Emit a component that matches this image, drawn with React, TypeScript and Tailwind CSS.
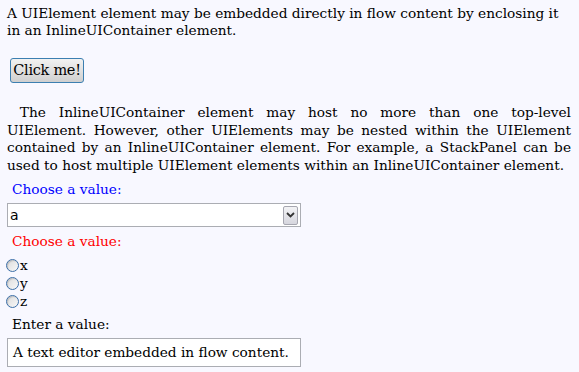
const lines = [
  "\u00a0The InlineUIContainer element may host no more than one top-level",
  "UIElement. However, other UIElements may be nested within the UIElement",
  "contained by an InlineUIContainer element. For example, a StackPanel can be",
];

export default function App() {
  return (
    <div className="w-[579px] h-[372px] bg-white overflow-hidden">
      <div
        className="h-full bg-[#f8f8ff] px-[7px] pt-[3px] text-[13.7px] leading-[17px] text-black"
        style={{ fontFamily: '"DejaVu Serif", Georgia, serif' }}
      >
        <p className="mt-[2px]">
          A UIElement element may be embedded directly in flow content by enclosing it in an InlineUIContainer element.
        </p>
        <div className="mt-[19px] pl-[3px]">
          <button className="h-[25px] w-[74px] rounded-[3px] border border-[#3c7fb1] bg-gradient-to-b from-[#f2f2f2] to-[#cfcfcf] text-[14.5px] leading-none tracking-[-0.3px]">
            Click me!
          </button>
        </div>
        <div className="mt-[21px] pr-[1px] leading-[17.5px]">
          {lines.map((l) => (
            <span key={l} className="block whitespace-nowrap text-justify [text-align-last:justify]">
              {l}
            </span>
          ))}
          <span className="block whitespace-nowrap">
            used to host multiple UIElement elements within an InlineUIContainer element.
          </span>
        </div>
        <div className="mt-[7px] pl-[5px] text-[#0000ff]">Choose a value:</div>
        <div className="mt-[5px] w-[294px] h-[24px] border border-[#abadb3] bg-white flex items-center justify-between pl-[2px] pr-[2px] text-[14px]" style={{ fontFamily: '"DejaVu Sans", sans-serif' }}>
          <span>a</span>
          <span className="w-[15px] h-[19px] rounded-[2px] border border-[#a6a6b0] bg-gradient-to-b from-[#f3f3f5] to-[#d6d6de] flex items-center justify-center">
            <svg width="9" height="6" viewBox="0 0 9 6">
              <path d="M1 1 L4.5 4.5 L8 1" stroke="#333" strokeWidth="1.8" fill="none" />
            </svg>
          </span>
        </div>
        <div className="mt-[6px] pl-[5px] text-[#ff0000]">Choose a value:</div>
        <div className="mt-[6px] flex flex-col -ml-[1px]">
          {["x", "y", "z"].map((v) => (
            <label key={v} className="flex items-center h-[18px]">
              <span className="w-[13px] h-[13px] rounded-full border border-[#3c6fa8] bg-gradient-to-br from-[#dcdcdc] to-[#f8f8f8] shadow-[inset_1px_1px_1px_rgba(0,0,0,0.15)]" />
              <span className="ml-[1px]">{v}</span>
            </label>
          ))}
        </div>
        <div className="mt-[6px] pl-[5px]">Enter a value:</div>
        <div className="mt-[5px] w-[294px] h-[29px] border border-[#abadb3] bg-white flex items-center pl-[5px]">
          A text editor embedded in flow content.
        </div>
      </div>
    </div>
  );
}
